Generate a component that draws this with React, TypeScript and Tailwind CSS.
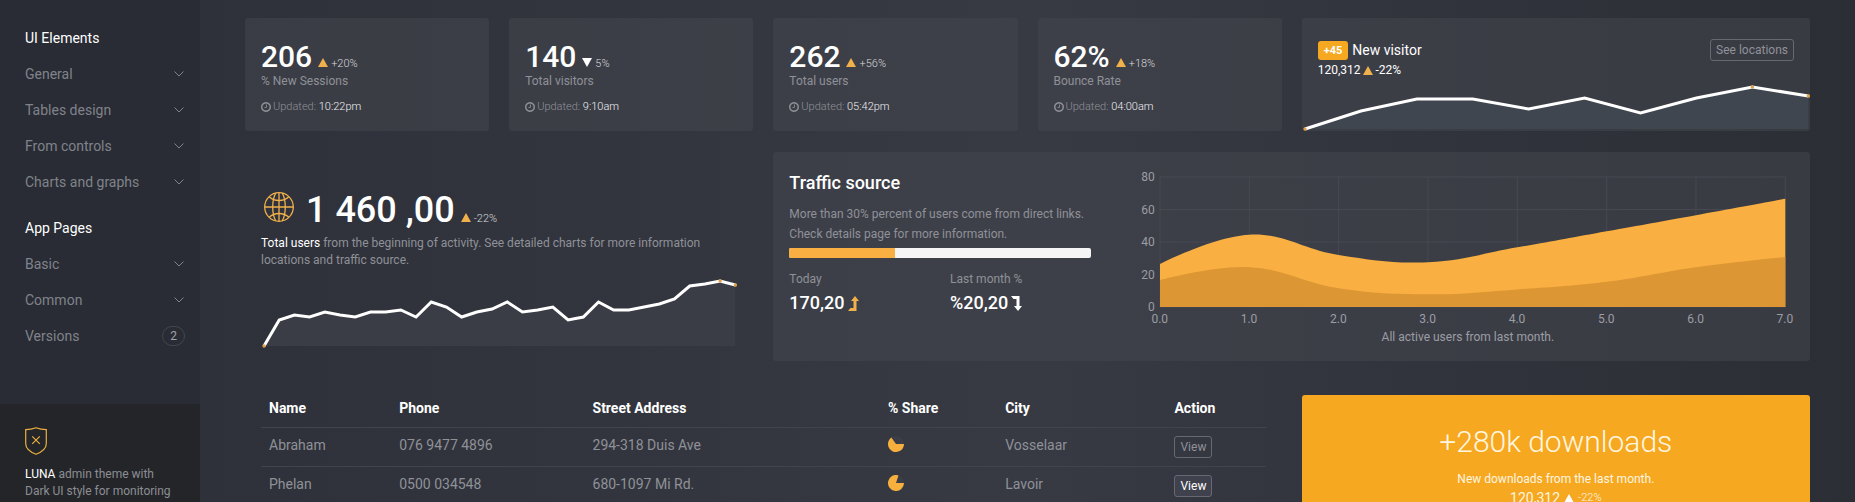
import React from 'react';
import clsx from 'clsx';

interface Stat {
  value: string;
  change: string;
  up: boolean;
  label: string;
  updated: string;
}

interface Customer {
  name: string;
  phone: string;
  address: string;
  share: number;
  city: string;
  active: boolean;
}

const uiElements = ['General', 'Tables design', 'From controls', 'Charts and graphs'];
const appPages = ['Basic', 'Common'];

const stats: Stat[] = [
  { value: '206', change: '+20%', up: true, label: '% New Sessions', updated: '10:22pm' },
  { value: '140', change: '5%', up: false, label: 'Total visitors', updated: '9:10am' },
  { value: '262', change: '+56%', up: true, label: 'Total users', updated: '05:42pm' },
  { value: '62%', change: '+18%', up: true, label: 'Bounce Rate', updated: '04:00am' },
];

const customers: Customer[] = [
  { name: 'Abraham', phone: '076 9477 4896', address: '294-318 Duis Ave', share: 0.65, city: 'Vosselaar', active: false },
  { name: 'Phelan', phone: '0500 034548', address: '680-1097 Mi Rd.', share: 0.8, city: 'Lavoir', active: true },
];

const visitorTrend = [0, 18, 30, 30, 20, 31, 16, 31, 42, 33];
const userTrend = [
  0, 26, 31, 29, 34, 31, 29, 34, 34, 36, 29, 44, 39, 29, 34, 37, 44, 34, 36, 39, 26, 29, 44, 36, 36, 39, 42, 47, 60,
  62, 65, 61,
];

const allUsers = [26.5, 44.5, 32, 27.6, 36.7, 46.6, 56.5, 66.6];
const directUsers = [16.5, 24.5, 11.5, 7.8, 10.8, 15.5, 24.5, 30.8];

const Caret: React.FC<{ up?: boolean; className?: string }> = ({ up = true, className }) => (
  <svg viewBox="0 0 10 9" className={clsx('inline-block h-[9px] w-[10px] shrink-0', className)} aria-hidden="true">
    <path d={up ? 'M5 0 10 9H0z' : 'M0 0h10L5 9z'} fill="currentColor" />
  </svg>
);

const LevelArrow: React.FC<{ up?: boolean; className?: string }> = ({ up = false, className }) => (
  <svg viewBox="0 0 11 15" className={clsx('h-[15px] w-[11px] shrink-0', className)} aria-hidden="true">
    <path
      d={up ? 'M7 0 11 5H8.500V15H0L2.500 12H5.500V5H3z' : 'M7 15 11 10H8.500V0H0L2.500 3H5.500V10H3z'}
      fill="currentColor"
    />
  </svg>
);

const ClockIcon = () => (
  <svg viewBox="0 0 1536 1792" className="h-[12px] w-[10px] shrink-0" fill="currentColor" aria-hidden="true">
    <path d="M896 544v448q0 14-9 23t-23 9h-320q-14 0-23-9t-9-23v-64q0-14 9-23t23-9h224v-352q0-14 9-23t23-9h64q14 0 23 9t9 23zm416 352q0-148-73-273t-198-198-273-73-273 73-198 198-73 273 73 273 198 198 273 73 273-73 198-198 73-273zm224 0q0 209-103 385.5t-279.5 279.5-385.5 103-385.5-103-279.5-279.5-103-385.5 103-385.5 279.5-279.5 385.5-103 385.5 103 279.5 279.5 103 385.5z" />
  </svg>
);

const GlobeIcon = () => (
  <svg viewBox="0 0 30 30" className="size-[30px]" fill="none" stroke="currentColor" strokeWidth="1.3" aria-hidden="true">
    <circle cx="15" cy="15" r="14.3" />
    <path d="M15 .7v28.6M.7 15h28.6" />
    <path d="M11.8 1C7.7 8 7.7 22 11.8 29M18.2 1c4.1 7 4.1 21 0 28" />
    <path d="M5.2 4.8C8 7.5 11 8.5 15 8.5s7-1 9.8-3.7M5.2 25.2C8 22.5 11 21.5 15 21.5s7 1 9.8 3.7" />
  </svg>
);

const ShieldIcon = () => (
  <svg viewBox="0 0 22 28" className="h-[28px] w-[22px]" fill="none" stroke="currentColor" strokeWidth="1.2" aria-hidden="true">
    <path d="M11 .7C8 1.8 4.5 2.5.7 2.6v13.9c0 5.5 4.5 8.5 10.3 10.8 5.8-2.3 10.3-5.3 10.3-10.8V2.600C17.5 2.5 14 1.8 11 .7z" />
    <path d="m7.2 9.3 7.6 7.6M14.8 9.3l-7.6 7.6" />
  </svg>
);

const Chevron = () => (
  <svg viewBox="0 0 10 6" className="h-[6px] w-[10px]" fill="none" stroke="currentColor" aria-hidden="true">
    <path d="m.5.5 4.5 4.5L9.5.5" />
  </svg>
);

const Pie: React.FC<{ share: number }> = ({ share }) => {
  const angle = share * 2 * Math.PI;
  const x = 8 + 8 * Math.cos(angle);
  const y = 8 + 8 * Math.sin(angle);
  return (
    <svg viewBox="0 0 16 16" className="size-4" role="img" aria-label={`${Math.round(share * 100)}%`}>
      <circle cx="8" cy="8" r="8" fill="#3b3e46" />
      <path d={`M8 8H16A8 8 0 1 1 ${x} ${y}z`} fill="#f7af3e" />
    </svg>
  );
};

interface SparklineProps {
  values: number[];
  width: number;
  height: number;
  fill: string;
  className?: string;
}

const Sparkline: React.FC<SparklineProps> = ({ values, width, height, fill, className }) => {
  const base = height - 2;
  const step = (width - 5) / (values.length - 1);
  const points = values.map((value, i) => [3 + i * step, base - value]);
  const line = points.map(([x, y]) => `${x},${y}`).join(' ');
  const top = values.indexOf(Math.max(...values));
  const spots = [0, top, values.length - 1];

  return (
    <svg viewBox={`0 0 ${width} ${height}`} preserveAspectRatio="none" className={className} aria-hidden="true">
      <polygon points={`${line} ${width - 2},${base} 3,${base}`} fill={fill} />
      <polyline points={line} fill="none" stroke="#fff" strokeWidth="3" vectorEffect="non-scaling-stroke" />
      {spots.map((i) => (
        <circle key={i} cx={points[i][0]} cy={points[i][1]} r="1.7" fill="#e0a04a" />
      ))}
    </svg>
  );
};

// Spline through one value per 100 units, closed down to the x axis
const areaPath = (values: number[]) => {
  const y = values.map((value) => 130 - (value * 130) / 80);
  const last = y.length - 1;
  const slope = (i: number) => (i === 0 || i === last ? null : (y[i + 1] - y[i - 1]) * 0.2);
  let d = `M0 ${y[0]}`;
  for (let i = 0; i < last; i++) {
    const from = slope(i);
    const to = slope(i + 1);
    const end = to === null ? [(i + 1) * 100, y[i + 1]] : [(i + 1) * 100 - 40, y[i + 1] - to];
    const start = from === null ? [i * 100, y[i]] : [i * 100 + 40, y[i] + from];
    d += `C${start.join(' ')} ${end.join(' ')} ${(i + 1) * 100} ${y[i + 1]}`;
  }
  return `${d}V130H0z`;
};

const TrafficChart = () => (
  <div className="text-xs leading-4 text-[#9b9da4]">
    <div className="flex gap-[5px]">
      <div className="flex w-[14px] flex-col justify-between text-right">
        {[80, 60, 40, 20, 0].map((tick) => (
          <span key={tick} className="flex h-0 items-center justify-end">
            {tick}
          </span>
        ))}
      </div>
      <svg viewBox="0 0 700 130" preserveAspectRatio="none" className="h-[130px] min-w-0 flex-1 overflow-visible">
        <g stroke="#474952">
          {[0, 1, 2, 3, 4, 5, 6, 7].map((i) => (
            <path key={i} d={`M${i * 100} 0V130`} vectorEffect="non-scaling-stroke" />
          ))}
          {[0, 1, 2, 3, 4].map((i) => (
            <path key={i} d={`M0 ${i * 32.5}H700`} vectorEffect="non-scaling-stroke" />
          ))}
        </g>
        <path d={areaPath(allUsers)} fill="#f9af41" />
        <path d={areaPath(directUsers)} fill="#dc9633" />
      </svg>
    </div>
    <div className="mt-1 flex justify-between pl-[19px]">
      {['0.0', '1.0', '2.0', '3.0', '4.0', '5.0', '6.0', '7.0'].map((tick) => (
        <span key={tick} className="flex w-0 justify-center">
          {tick}
        </span>
      ))}
    </div>
    <p className="mt-[2px] pl-[10px] text-center">All active users from last month.</p>
  </div>
);

const Panel: React.FC<{ className?: string; children: React.ReactNode }> = ({ className, children }) => (
  <section className={clsx('rounded-[3px] bg-[#45474f]/50', className)}>{children}</section>
);

const StatCard: React.FC<{ stat: Stat }> = ({ stat }) => (
  <Panel className="px-4 pt-[22px] pb-4">
    <h2 className="flex h-[33px] items-baseline text-[30px] leading-[33px] font-medium text-white">
      {stat.value}
      <Caret up={stat.up} className={clsx('ml-[6px]', stat.up ? 'text-[#f0b04c]' : 'text-white')} />
      <span className="ml-[3px] text-[11px] leading-none font-light text-[#d5d6da]">{stat.change}</span>
    </h2>
    <p className="text-xs leading-[17px] text-[#8f9198]">{stat.label}</p>
    <p className="mt-[9px] flex items-center gap-[2px] text-[11px] leading-4 font-light text-[#8f9198]">
      <ClockIcon />
      <span>
        Updated: <span className="text-[#eeeff1]">{stat.updated}</span>
      </span>
    </p>
  </Panel>
);

const Sidebar = () => (
  <aside className="flex w-[200px] shrink-0 flex-col bg-[#292c34]">
    <nav className="pt-5 pr-[15px] pl-[25px] text-sm leading-9 text-[#80838b]">
      <h2 className="text-white">UI Elements</h2>
      <ul>
        {uiElements.map((item) => (
          <li key={item}>
            <a href="#" className="flex items-center justify-between pr-px">
              {item}
              <Chevron />
            </a>
          </li>
        ))}
      </ul>
      <h2 className="mt-[10px] text-white">App Pages</h2>
      <ul>
        {appPages.map((item) => (
          <li key={item}>
            <a href="#" className="flex items-center justify-between pr-px">
              {item}
              <Chevron />
            </a>
          </li>
        ))}
        <li>
          <a href="#" className="flex items-center justify-between">
            Versions
            <span className="flex h-5 w-[23px] items-center justify-center rounded-full border border-[#43464e] text-xs text-[#a0a2a8]">
              2
            </span>
          </a>
        </li>
      </ul>
    </nav>
    <div className="mt-[50px] flex-1 bg-[#242529] pt-[23px] pl-[25px] text-xs leading-[17px] text-[#8c8e94]">
      <span className="text-[#e9ae3f]">
        <ShieldIcon />
      </span>
      <p className="mt-[11px]">
        <span className="text-white">LUNA</span> admin theme with
        <br />
        Dark UI style for monitoring
      </p>
    </div>
  </aside>
);

const CustomerTable = () => (
  <table className="w-full table-fixed text-left text-sm text-[#8f9198]">
    <thead>
      <tr className="h-8 align-top font-bold text-white">
        <th className="w-[130px] px-2 pt-[3px]">Name</th>
        <th className="w-[193px] px-2 pt-[3px]">Phone</th>
        <th className="w-[295px] px-2 pt-[3px]">Street Address</th>
        <th className="w-[117px] px-2 pt-[3px]">% Share</th>
        <th className="w-[169px] px-2 pt-[3px]">City</th>
        <th className="w-[99px] px-2 pt-[3px]">Action</th>
      </tr>
    </thead>
    <tbody>
      {customers.map((customer) => (
        <tr key={customer.name} className="h-[39px] border-t border-[#41444d] align-top leading-[18px]">
          <td className="px-2 pt-2">{customer.name}</td>
          <td className="px-2 pt-2">{customer.phone}</td>
          <td className="px-2 pt-2">{customer.address}</td>
          <td className="px-2 pt-2">
            <Pie share={customer.share} />
          </td>
          <td className="px-2 pt-2">{customer.city}</td>
          <td className="px-2 pt-2">
            <button
              type="button"
              className={clsx(
                'flex h-[22px] items-center rounded-[3px] border border-[#666972] px-[5px] text-xs',
                customer.active ? 'bg-[#3f414d] text-white' : 'text-[#8f9198]',
              )}
            >
              View
            </button>
          </td>
        </tr>
      ))}
    </tbody>
  </table>
);

export default function App() {
  return (
    <div className="flex h-screen overflow-hidden bg-[#2d3038] font-['Roboto',sans-serif]">
      <Sidebar />
      <main className="min-w-0 flex-1 bg-linear-to-r from-[#2e3139] via-[#373943] to-[#2c2e36] px-[45px] pt-[18px]">
        <div className="grid grid-cols-6 gap-x-5">
          {stats.map((stat) => (
            <StatCard key={stat.label} stat={stat} />
          ))}
          <Panel className="col-span-2 flex flex-col justify-between">
            <div className="flex items-start justify-between px-4 pt-[21px]">
              <div className="text-white">
                <p className="flex items-center gap-1 text-sm leading-[22px]">
                  <span className="rounded-[3px] bg-[#f6a821] px-[6px] text-[11px] leading-[19px] font-bold">+45</span>
                  New visitor
                </p>
                <p className="flex items-center text-xs leading-[18px]">
                  120,312
                  <Caret className="mr-[2px] ml-[3px] text-[#f0b04c]" />
                  -22%
                </p>
              </div>
              <button
                type="button"
                className="flex h-[22px] items-center rounded-[3px] border border-[#666972] px-[5px] text-xs text-[#8f9198]"
              >
                See locations
              </button>
            </div>
            <Sparkline values={visitorTrend} width={508} height={48} fill="#404650" className="h-12 w-full" />
          </Panel>
        </div>

        <div className="mt-[21px] grid grid-cols-6 gap-x-5">
          <section className="col-span-2 px-4 pt-[38px]">
            <h2 className="flex h-10 items-baseline text-4xl leading-10 font-medium text-white">
              <span className="mr-3 ml-[3px] leading-none text-[#f0b04c]">
                <GlobeIcon />
              </span>
              1 460 ,00
              <Caret className="ml-[6px] text-[#f0b04c]" />
              <span className="ml-[3px] text-[11px] leading-none font-light text-[#d5d6da]">-22%</span>
            </h2>
            <p className="mt-[5px] text-xs leading-[17px] text-[#8f9198]">
              <span className="text-white">Total users</span> from the beginning of activity. See detailed charts for
              more information locations and traffic source.
            </p>
            <Sparkline values={userTrend} width={476} height={70} fill="#3a3c46" className="mt-[9px] h-[70px] w-full" />
          </section>

          <Panel className="col-span-4 flex min-h-[209px] px-4">
            <div className="w-[30%] pt-[21px] text-xs text-[#8f9198]">
              <h3 className="text-lg leading-5 font-medium text-white">Traffic source</h3>
              <p className="mt-[11px] leading-5">
                More than 30% percent of users come from direct links. Check details page for more information.
              </p>
              <div className="mt-1 h-[10px] overflow-hidden rounded-[2px] bg-[#f5f5f5]">
                <div className="h-full w-[35%] bg-[#f9af41]" />
              </div>
              <div className="mt-[13px] grid grid-cols-2 gap-x-5 leading-[17px]">
                <div>
                  <p>Today</p>
                  <p className="mt-[3px] flex items-center gap-[3px] text-lg leading-6 font-medium text-white">
                    170,20 <LevelArrow up className="text-[#f0b04c]" />
                  </p>
                </div>
                <div>
                  <p>Last month %</p>
                  <p className="mt-[3px] flex items-center gap-[3px] text-lg leading-6 font-medium text-white">
                    %20,20 <LevelArrow />
                  </p>
                </div>
              </div>
            </div>
            <div className="ml-[50px] min-w-0 flex-1 pt-[25px] pr-[9px]">
              <TrafficChart />
            </div>
          </Panel>
        </div>

        <div className="mt-[34px] grid grid-cols-6 gap-x-5">
          <section className="col-span-4 px-4">
            <CustomerTable />
          </section>
          <section className="col-span-2 rounded-t-[3px] bg-[#f6a821] pt-[27px] text-center text-[#fff6e0]">
            <h2 className="text-[30px] leading-[40px] font-light">+280k downloads</h2>
            <p className="mt-[9px] text-xs leading-[17px]">New downloads from the last month.</p>
            <p className="flex items-center justify-center gap-1 text-sm leading-5">
              120,312
              <Caret className="text-white" />
              <span className="text-[11px] font-light">-22%</span>
            </p>
          </section>
        </div>
      </main>
    </div>
  );
}
